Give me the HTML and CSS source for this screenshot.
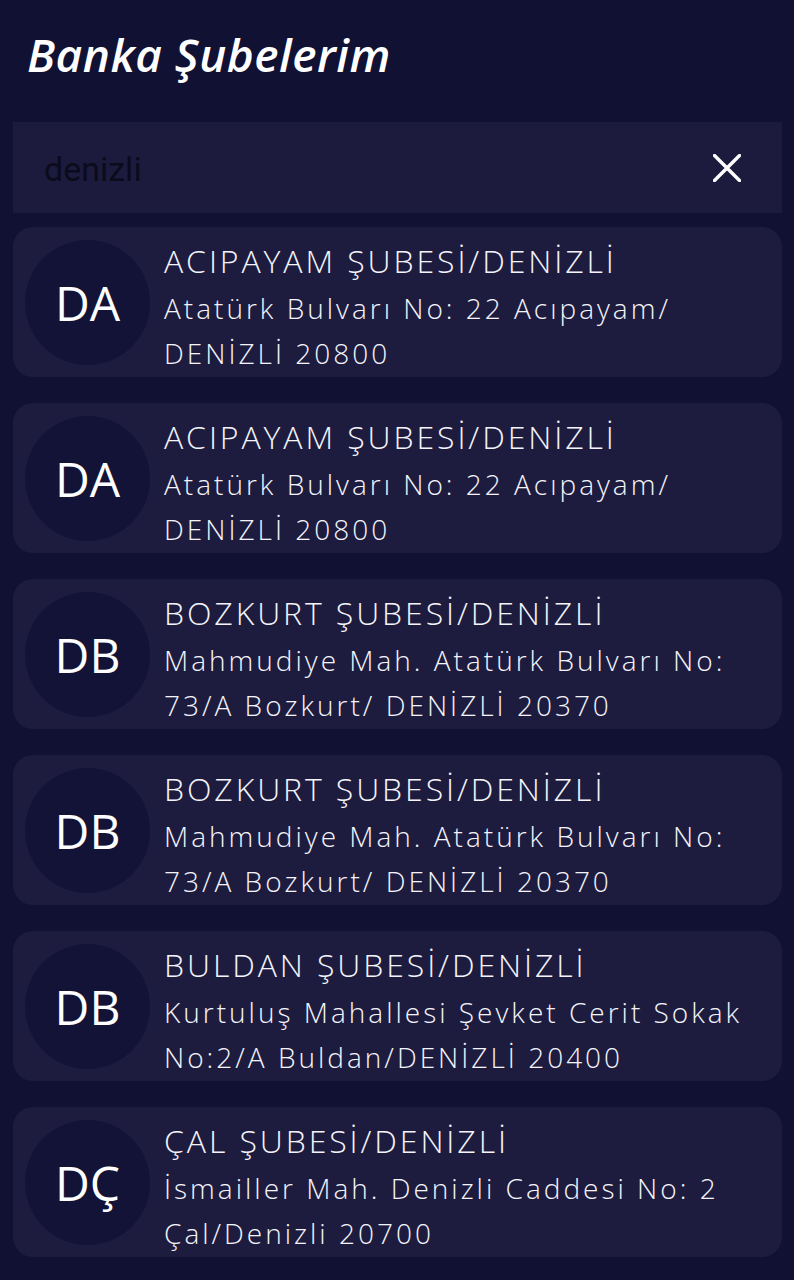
FILE: index.html
```html
<!DOCTYPE html>
<html lang="tr">
<head>
<meta charset="utf-8">
<title>Banka Şubelerim</title>
<link rel="stylesheet" href="styles.css">
</head>
<body>
<div class="page">
  <h1 class="title">Banka Şubelerim</h1>
  <div class="search">
    <span class="search-text">denizli</span>
    <svg class="clear" width="28" height="28" viewBox="0 0 28 28"><path d="M1.5 1.5L26.5 26.5M26.5 1.5L1.5 26.5" stroke="#fff" stroke-width="3.4" stroke-linecap="round"/></svg>
  </div>
  <ul class="list">
    <li class="card"><div class="avatar">DA</div><div class="info"><div class="name">ACIPAYAM ŞUBESİ/DENİZLİ</div><div class="addr">Atatürk Bulvarı No: 22 Acıpayam/ DENİZLİ 20800</div></div></li>
    <li class="card"><div class="avatar">DA</div><div class="info"><div class="name">ACIPAYAM ŞUBESİ/DENİZLİ</div><div class="addr">Atatürk Bulvarı No: 22 Acıpayam/ DENİZLİ 20800</div></div></li>
    <li class="card"><div class="avatar">DB</div><div class="info"><div class="name">BOZKURT ŞUBESİ/DENİZLİ</div><div class="addr">Mahmudiye Mah. Atatürk Bulvarı No: 73/A Bozkurt/ DENİZLİ 20370</div></div></li>
    <li class="card"><div class="avatar">DB</div><div class="info"><div class="name">BOZKURT ŞUBESİ/DENİZLİ</div><div class="addr">Mahmudiye Mah. Atatürk Bulvarı No: 73/A Bozkurt/ DENİZLİ 20370</div></div></li>
    <li class="card"><div class="avatar">DB</div><div class="info"><div class="name">BULDAN ŞUBESİ/DENİZLİ</div><div class="addr">Kurtuluş Mahallesi Şevket Cerit Sokak No:2/A Buldan/DENİZLİ 20400</div></div></li>
    <li class="card"><div class="avatar">DÇ</div><div class="info"><div class="name">ÇAL ŞUBESİ/DENİZLİ</div><div class="addr">İsmailler Mah. Denizli Caddesi No: 2 Çal/Denizli 20700</div></div></li>
  </ul>
</div>
</body>
</html>
```

FILE: styles.css
```css
html, body {
  margin: 0;
  padding: 0;
  background: #111134;
}
body {
  font-family: "Open Sans", "DejaVu Sans", sans-serif;
  color: #f4f4fa;
}
.page {
  padding: 0 12px 0 13px;
}
.title {
  margin: 0;
  padding: 24px 0 0 14px;
  height: 122px;
  box-sizing: border-box;
  font-size: 46px;
  line-height: 60px;
  font-style: italic;
  font-weight: 600;
  color: #ffffff;
  letter-spacing: 0.5px;
}
.search {
  height: 91px;
  background: #1c1b3e;
  display: flex;
  align-items: center;
  justify-content: space-between;
  padding: 0 41px 0 31px;
  box-sizing: border-box;
}
.search-text {
  font-family: Roboto, "Open Sans", sans-serif;
  font-size: 34px;
  color: #0b0b1c;
  padding-top: 2px;
}
.clear {
  display: block;
}
.list {
  list-style: none;
  margin: 14px 0 0;
  padding: 0;
  display: flex;
  flex-direction: column;
  gap: 26px;
}
.card {
  background: #1d1c3f;
  border-radius: 20px;
  height: 150px;
  box-sizing: border-box;
  padding: 0 12px;
  display: flex;
  align-items: center;
  gap: 14px;
}
.avatar {
  flex: 0 0 125px;
  height: 125px;
  border-radius: 50%;
  background: #131337;
  display: flex;
  align-items: center;
  justify-content: center;
  font-size: 48px;
  font-weight: 400;
  color: #ffffff;
}
.info {
  flex: 1;
  padding-top: 7px;
  font-weight: 300;
}
.name {
  font-size: 32px;
  line-height: 50px;
  letter-spacing: 2.9px;
}
.addr {
  font-size: 28px;
  line-height: 45px;
  letter-spacing: 3px;
}
```
